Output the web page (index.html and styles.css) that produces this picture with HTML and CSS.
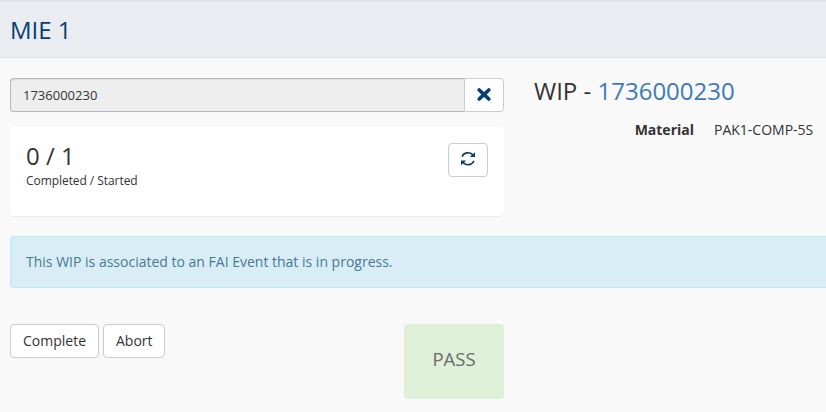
FILE: index.html
```
<!DOCTYPE html>
<html lang="en">
<head>
<meta charset="utf-8">
<title>MIE 1</title>
<link rel="stylesheet" href="styles.css">
</head>
<body>
<header class="heading"><h1>MIE 1</h1></header>
<main class="content">
  <div class="top">
    <section class="left">
      <div class="input-group">
        <div class="field">1736000230</div>
        <button class="addon" aria-label="Clear"><svg width="16" height="16" viewBox="0 0 16 16"><path d="M3.2 3 12.8 12M12.8 3 3.2 12" stroke="#063f75" stroke-width="3.7" stroke-linecap="round"/></svg></button>
      </div>
      <div class="panel">
        <div>
          <div class="count">0 / 1</div>
          <div class="caption">Completed / Started</div>
        </div>
        <button class="btn refresh" aria-label="Refresh"><svg width="16" height="16" viewBox="0 0 16 16" fill="none" stroke="#063f75" stroke-width="1.6"><path d="M2 5.600C4 1.300 9.500.6 12.800 3.900M14 9.900C12 14.200 6.500 14.900 3.200 11.600"/><path d="M15 1.300V6H9.800ZM1 14.200V9.500H6.200Z" fill="#063f75" stroke="none"/></svg></button>
      </div>
    </section>
    <section class="right">
      <h2>WIP - <a>1736000230</a></h2>
      <dl><dt>Material</dt><dd>PAK1-COMP-5S</dd></dl>
    </section>
  </div>
  <div class="alert">This WIP is associated to an FAI Event that is in progress.</div>
  <div class="actions">
    <div class="buttons"><button class="btn">Complete</button><button class="btn abort">Abort</button></div>
    <div class="pass">PASS</div>
  </div>
</main>
</body>
</html>
```
FILE: styles.css
```
* { box-sizing: border-box; }
body { margin: 0; height: 412px; overflow: hidden; background: #f9f9f9; color: #333; font: 14px/20px "Open Sans", sans-serif; }
.heading { height: 58px; padding: 13px 10px 0; background: #e9ecf1; border-top: 2px solid #dfe3e8; border-bottom: 1px solid #d9e0e6; }
h1, h2 { margin: 0; font-weight: 400; font-size: 24px; line-height: 30px; }
h1 { color: #063f75; }
.content { padding: 20px 0 0 10px; }
.top { display: flex; gap: 30px; }
.left { width: 494px; flex: none; }
.input-group { display: flex; height: 34px; }
.field { flex: 1; padding: 6px 12px; background: #eee; border: 1px solid #b5b8ba; border-right: 0; border-radius: 4px 0 0 4px; font-size: 13px; box-shadow: inset 0 1px 1px rgba(0,0,0,.075); }
button { font: inherit; color: #333; background: #fff; border: 1px solid #ccc; }
.addon { width: 40px; padding: 0; border-radius: 0 4px 4px 0; }
.addon svg, .refresh svg { display: block; margin: auto; }
.refresh svg { position: relative; top: -1px; }
.panel { display: flex; justify-content: space-between; height: 89px; margin-top: 15px; padding: 16px; background: #fff; border-radius: 4px; box-shadow: 0 1px 1px rgba(0,0,0,.05); }
.count { margin-top: -1px; font-size: 24px; line-height: 28px; }
.caption { margin-top: 1px; font-size: 12px; line-height: 20px; letter-spacing: -.06px; }
.btn { height: 34px; padding: 0 12px; border-radius: 4px; }
.abort { width: 62px; }
.refresh { width: 40px; padding: 0; }
.right { flex: 1; }
.right h2 { margin-top: -2px; }
a { color: #3d79b8; }
dl { display: flex; gap: 20px; margin: 14px 0 0; }
dt { width: 160px; text-align: right; font-weight: 700; }
dd { margin: 0; white-space: nowrap; }
.alert { height: 52px; margin-top: 20px; padding: 15px; background: #d9edf7; border: 1px solid #bce8f1; border-right: 0; border-radius: 4px 0 0 4px; color: #467990; }
.actions { display: flex; justify-content: space-between; width: 494px; margin-top: 36px; }
.buttons { display: flex; gap: 4px; }
.pass { width: 100px; height: 75px; padding-top: 22px; text-align: center; background: #dff0d8; border-radius: 4px; color: #6b6b6b; font-size: 18.500px; line-height: 26px; }
```
